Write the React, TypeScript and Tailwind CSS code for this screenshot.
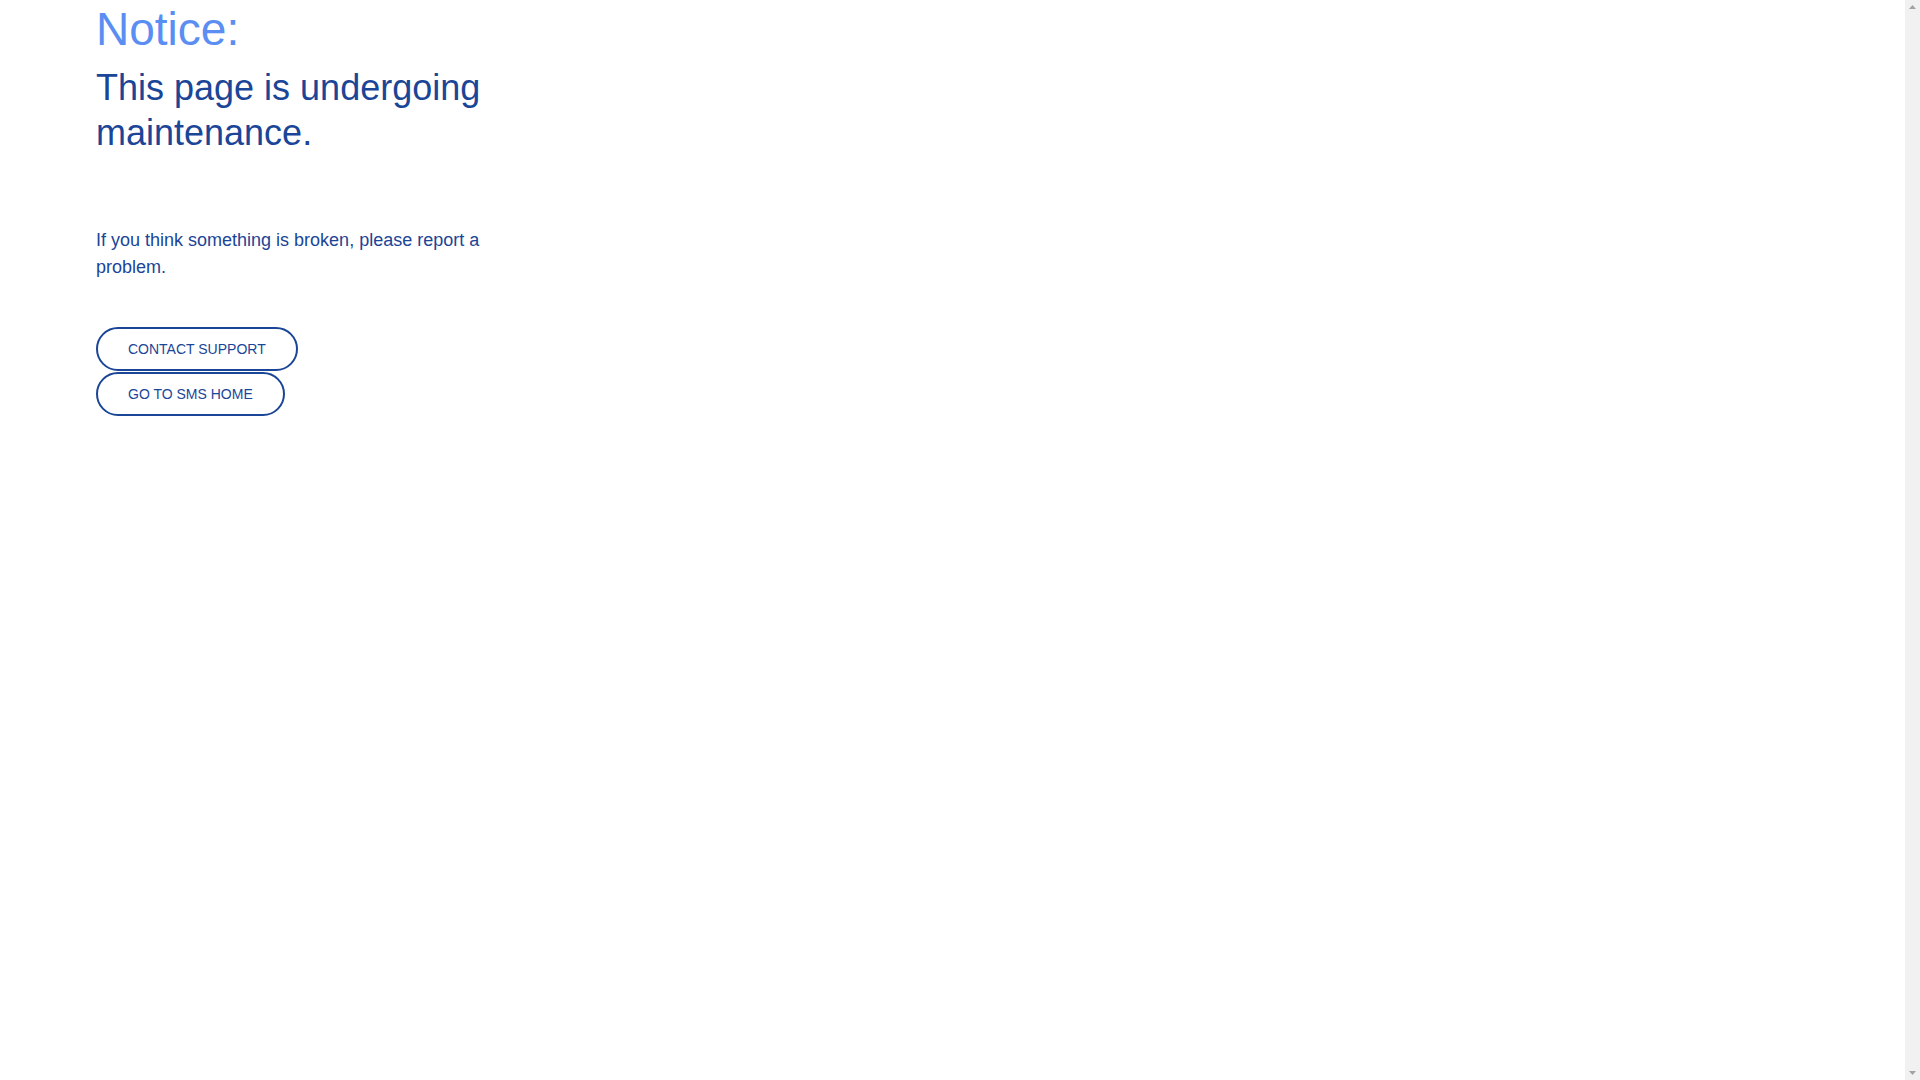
export default function App() {
  return (
    <div className="flex h-screen bg-white font-['Liberation_Sans',Arial,sans-serif]">
      <main className="min-w-0 flex-1">
        <div className="w-[526px] pl-[96px]">
          <h1 className="text-[46px] leading-[58px] text-[#5a8ef2]">Notice:</h1>
          <h2 className="mt-[7px] text-[36px] leading-[45px] text-[#1b4597]">This page is undergoing maintenance.</h2>
          <p className="mt-[72px] text-[18px] leading-[27px] text-[#1b4597]">
            If you think something is broken, please report a problem.
          </p>
          <div className="mt-[46px] flex flex-col items-start gap-px">
            <button className="h-[44px] rounded-full border-2 border-[#1b4597] px-[30px] text-[14px] text-[#1b4597]">
              CONTACT SUPPORT
            </button>
            <button className="h-[44px] rounded-full border-2 border-[#1b4597] px-[30px] text-[14px] text-[#1b4597]">
              GO TO SMS HOME
            </button>
          </div>
        </div>
      </main>
      {/* disabled browser scrollbar */}
      <div className="flex w-[15px] flex-col items-center justify-between bg-[#f1f1f1] py-[5px]">
        <svg width="7" height="4" viewBox="0 0 7 4" className="fill-[#a3a3a3]">
          <path d="M3.5 0L7 4H0z" />
        </svg>
        <svg width="7" height="4" viewBox="0 0 7 4" className="fill-[#a3a3a3]">
          <path d="M0 0h7L3.5 4z" />
        </svg>
      </div>
    </div>
  );
}
